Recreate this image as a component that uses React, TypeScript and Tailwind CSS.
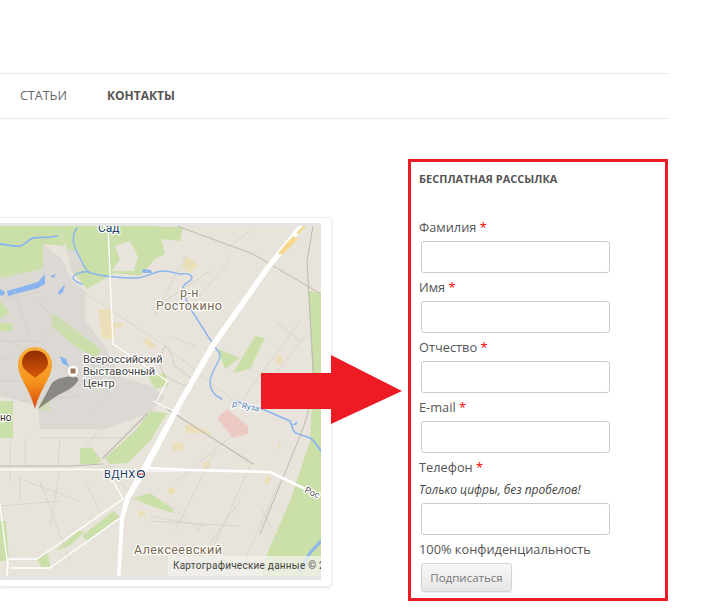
const fields = [
  { label: "Фамилия" },
  { label: "Имя" },
  { label: "Отчество" },
  { label: "E-mail" },
  { label: "Телефон", hint: "Только цифры, без пробелов!" },
];

function MapArt() {
  return (
    <svg viewBox="0 225 321 350" className="block h-[350px] w-[321px]" style={{ fontFamily: "Roboto, sans-serif" }}>
      <defs>
        <linearGradient id="pinDrop" x1="0" y1="0" x2="0" y2="1">
          <stop offset="0" stopColor="#8f2c00" />
          <stop offset="1" stopColor="#dd5a0a" />
        </linearGradient>
        <linearGradient id="pinBody" x1="0" y1="0" x2="0" y2="1">
          <stop offset="0" stopColor="#fbb03b" />
          <stop offset="0.55" stopColor="#f7941d" />
          <stop offset="1" stopColor="#d9480f" />
        </linearGradient>
      </defs>
      <rect x="0" y="225" width="321" height="350" fill="#e8e4dc" />
      {/* urban grey */}
      <path d="M0 277L43 268L43 243L62 258L72 280L85 290L85 320L105 345L120 375L150 385L165 395L150 412L105 428L40 428L38 405L0 395Z" fill="#dcd8d3" />
      {/* greens */}
      <path d="M0 225H57L65 245L43 243L43 268L0 277Z" fill="#cbdfa8" />
      <path d="M57 225H158L165 253L155 258L140 275L115 272L87 288L72 270L66 245Z" fill="#cbdfa8" />
      <path d="M66 248L78 250L84 268L72 272Z" fill="#dcd8d3" />
      <path d="M115 245L130 240L138 256L134 270L112 270L120 258Z" fill="#e8e4dc" />
      <path d="M158 226H183L180 240L160 238Z" fill="#cbdfa8" />
      <path d="M52 312L66 322L100 348L98 358L75 345L52 325Z" fill="#cbdfa8" />
      <path d="M0 322H12V330H0ZM0 300L10 312L0 318ZM100 312H105V320H100Z" fill="#cbdfa8" />
      <path d="M0 400H13V437H0Z" fill="#cbdfa8" />
      <path d="M148 375L165 372L168 385L155 388Z" fill="#cbdfa8" />
      <path d="M167 412L150 440L128 462L110 463L105 457L135 430L150 410Z" fill="#cbdfa8" />
      <path d="M80 447H92L102 460L96 463H80Z" fill="#cbdfa8" />
      <path d="M40 400H50V410H40Z" fill="#cbdfa8" opacity="0.6" />
      <path d="M0 520H6L9 560H0Z" fill="#cbdfa8" />
      <path d="M113 510L120 516L87 540L82 535Z" fill="#cbdfa8" />
      <path d="M85 530L70 545L55 550L78 530Z" fill="#cbdfa8" />
      <path d="M133 497L150 492L173 508V512L148 504Z" fill="#cbdfa8" />
      <path d="M37 558L48 552L50 566L42 567Z" fill="#cbdfa8" />
      <path d="M255 335L265 337L250 368L233 372Z" fill="#cbdfa8" />
      <path d="M218 348L240 357L225 368Z" fill="#cbdfa8" />
      <path d="M308 290L321 292V575H262L267 553L290 500L310 440L313 380Z" fill="#cbdfa8" />
      {/* yellow plots */}
      <path d="M186 255L198 264L190 272L182 266Z" fill="#ebdfb9" />
      <path d="M98 308H112V322H123V326H115V338H102Z" fill="#ebdfb9" />
      <path d="M147 336L157 345L150 348L143 341Z" fill="#ebdfb9" />
      <path d="M276 354H282V363H276ZM173 442H183V450H173ZM203 461L210 460V467H203ZM168 487H175V493H168ZM138 510H145V515H138ZM267 475L272 477L267 484L264 482ZM278 442L282 445L278 449Z" fill="#ebdfb9" />
      <path d="M185 425L192 423L213 433L198 432L186 432Z" fill="#ebdfb9" />
      {/* pink */}
      <path d="M217 417L227 408L248 425L248 433L233 437Z" fill="#edc9c4" />
      {/* water */}
      <g fill="none" stroke="#8ab4f0" strokeLinecap="round" strokeLinejoin="round">
        <path d="M0 243C10 244 15 246 20 245C27 243 28 238 33 237C42 236 50 237 57 235" strokeWidth="1.8" />
        <path d="M77 227C71 235 73 245 79 255C83 262 84 268 90 272C105 276 125 277 137 277C148 276 155 270 163 270C172 270 176 273 180 273C186 272 192 273 192 277C190 282 182 282 183 288C185 296 188 305 192 310L213 343L220 353C222 358 212 368 210 380C210 390 215 395 222 398" strokeWidth="1.4" />
        <path d="M90 271C82 270 73 273 73 277C74 280 78 282 82 283" strokeWidth="1.4" />
        <path d="M233 400C240 402 250 403 260 407L290 420C293 425 292 431 296 432L310 437C315 440 318 446 321 450" strokeWidth="1.7" />
        <path d="M321 540L310 552L300 570" strokeWidth="3" />
      </g>
      <path d="M7 290L38 281L45 273L45 283L38 287L8 295ZM0 288L5 291L3 295L0 294ZM58 291L65 283L63 291L59 294ZM50 275L56 273L54 277ZM142 268L151 269L152 272H143ZM60 355L66 358L69 366L62 362ZM82 380L86 378V384ZM292 424L298 420L296 424Z" fill="#8ab4f0" />
      {/* small streets */}
      <g fill="none" stroke="#d3cec4" strokeWidth="0.7">
        <path d="M155 315L185 255M165 300L210 270M195 300L230 260M85 292L165 345L240 405M170 335L195 345M243 398L300 320M262 390L305 335M275 320L300 340M225 248L250 230" />
        <path d="M60 320L90 345M20 360L60 320M10 340L70 370M0 340H40M30 295L85 345M20 400L80 395M10 440V480M76 470L115 465M40 480L70 560M0 505L60 500M60 470L50 525M20 478L80 500M120 480L135 500M170 486L240 428M240 500L190 570M215 450L175 530M250 465L205 565M150 520L240 525M165 500L200 530M280 480L240 570M260 505L280 545M150 515L205 525M40 437H130" />
        <path d="M0 300L40 290M15 290L30 340M40 300L60 330M0 360L30 345M55 395L100 375M85 350L110 395M120 385L90 415M0 380H20M25 437V465M60 437L58 465M100 428L85 447M20 475V500M85 480L100 510" />
      </g>
      <path d="M165 345C160 355 158 365 165 375L185 385L192 378L175 365C172 358 172 350 165 345Z" fill="none" stroke="#c9c4ba" strokeWidth="0.8" />
      <g fill="none" stroke="#bdb9b0" strokeLinecap="round" strokeLinejoin="round">
        <path d="M177 225L253 253L321 293" strokeWidth="1" />
        <path d="M313 225L307 260L313 367C313 395 310 410 300 435L260 533" strokeWidth="1" />
        <path d="M167 408L253 463" strokeWidth="1.1" />
        <path d="M147 413L103 457" strokeWidth="1.3" />
        <path d="M0 465H70L103 463" strokeWidth="1" />
      </g>
      {/* white roads */}
      <g fill="none" stroke="#ffffff" strokeLinecap="butt" strokeLinejoin="round">
        <path d="M108 225L113 343L167 380L157 400" strokeWidth="1.3" />
        <path d="M153 400L180 413" strokeWidth="1.3" />
        <path d="M0 468.5H104" strokeWidth="1.4" />
        <path d="M147 467L190 469L270 471L320 495" strokeWidth="2.6" />
        <path d="M147 470L185 470" strokeWidth="1" />
        <path d="M113 480L123 498L37 558H8L7 575" strokeWidth="1.4" />
        <path d="M120 517L50 567H10" strokeWidth="1.4" />
        <path d="M0 503L8 567" strokeWidth="1.3" />
      </g>
      <path d="M298 225L265 266L211 342L178 400L144 462L125 496L120 517L117 575H120.500L124 518L130 498L150 465L183 402L216 345L270 268L305 225Z" fill="#ffffff" />
      <path d="M278 252L293 235L298 238L282 254ZM296 232L303 225H306L299 233Z" fill="#f4d88c" />
      {/* pin */}
      <path d="M38 408L52 382C58 376 72 374 78 377C80 382 68 390 58 394Z" fill="#66665f" opacity="0.7" />
      <path d="M18 364C18 353 26 346 35 346C44 346 52 353 52 364C52 376 40 388 35 408C30 388 18 376 18 364Z" fill="url(#pinBody)" />
      <path d="M22 362C22 354 28 349.500 35 349.500C42 349.500 48 354 48 362C48 369 39 373 35 377C31 373 22 369 22 362Z" fill="url(#pinDrop)" />
      <circle cx="73" cy="370" r="6" fill="#fff" stroke="#d3cec4" />
      <rect x="70.500" y="367.500" width="5" height="5" fill="#9b7653" />
      {/* labels */}
      <g stroke="#ffffff" strokeWidth="2.4" paintOrder="stroke" strokeLinejoin="round">
        <text x="98" y="231" fontSize="12" fill="#1c3d64">Сад</text>
        <text x="180" y="296" fontSize="12.500" letterSpacing="0.4" fill="#7b6b4f">р-н</text>
        <text x="156" y="309" fontSize="12.500" letterSpacing="0.4" fill="#7b6b4f">Ростокино</text>
        <text x="83" y="362" fontSize="11" fill="#444">Всероссийский</text>
        <text x="83" y="374" fontSize="11" fill="#444">Выставочный</text>
        <text x="83" y="386" fontSize="11" fill="#444">Центр</text>
        <text x="0" y="420" fontSize="10" fill="#333">но</text>
        <text x="104" y="477" fontSize="11" letterSpacing="0.4" fill="#1c3d64">ВДНХ</text>
        <text x="134" y="553" fontSize="12.500" letterSpacing="0.4" fill="#7b6b4f">Алексеевский</text>
        <text x="232" y="405" fontSize="8.500" fill="#4b79a8" transform="rotate(12 232 405)">р. Яуза</text>
        <text x="304" y="491" fontSize="9" fill="#555" transform="rotate(25 304 491)">Рос</text>
      </g>
      <circle cx="141" cy="473" r="3.400" fill="#fff" stroke="#1c3d64" strokeWidth="1.200" />
      <rect x="138.500" y="472.400" width="5" height="1.300" fill="#d0454c" />
      {/* attribution */}
      <rect x="168" y="555" width="153" height="20" fill="#f3f1ec" opacity="0.75" />
      <text x="173" y="568" fontSize="10" letterSpacing="0.25" fill="#444">Картографические данные © 2</text>
    </svg>
  );
}

export default function App() {
  return (
    <div className="relative h-[612px] w-[716px] overflow-hidden bg-white font-['Open_Sans',sans-serif] text-[12.8px] text-[#555]">
      <div className="h-[73px]" />
      <nav className="flex h-[46px] w-[669px] items-center gap-10 border-y border-[#ececec] pl-5 text-[12.5px] uppercase text-[#666]">
        <a>Статьи</a>
        <a className="text-[12px] font-bold text-[#555]">Контакты</a>
      </nav>
      <div className="flex items-start">
        <div className="mt-[98px] w-[332px] rounded-r border-y border-r border-[#eeeeee] pb-[6px] pt-[5px] shadow-[0_1px_3px_rgba(0,0,0,0.1)]">
          <div className="w-[321px] border-b-4 border-t-[3px] border-[#e5e5e5]">
            <MapArt />
          </div>
        </div>
        <aside className="ml-[76px] mt-10 h-[442px] w-[260px] border-[3px] border-[#ed1c24] px-2 pt-[9px]">
          <h3 className="text-[11px] font-bold uppercase leading-4 text-[#555]">Бесплатная рассылка</h3>
          <form className="mt-[30px]">
            {fields.map((f) => (
              <div key={f.label}>
                <label className="block h-[20px] leading-5">
                  {f.label} <span className="text-[#ff0000]">*</span>
                </label>
                {f.hint ? <p className="mt-[3px] h-[19px] text-[12px] italic leading-5 text-[#444]">{f.hint}</p> : null}
                <input className="mb-[4px] ml-[2px] mt-[4px] block h-[32px] w-[189px] rounded-[3px] border border-[#cccccc] bg-white" />
              </div>
            ))}
            <p className="h-[20px] leading-5">100% конфиденциальность</p>
            <button
              type="button"
              className="ml-[2px] mt-[4px] h-[29px] w-[91px] rounded-[3px] border border-[#d4d4d4] bg-linear-to-b from-[#f7f7f7] to-[#e6e6e6] text-[11.5px] text-[#777] shadow-[0_1px_1px_rgba(0,0,0,0.08)]"
            >
              Подписаться
            </button>
          </form>
        </aside>
      </div>
      <svg viewBox="0 0 142 70" className="absolute left-[261px] top-[355px] h-[70px] w-[142px]">
        <path d="M0 18H70V0L141 36L70 69V54H0Z" fill="#ed1c24" />
      </svg>
    </div>
  );
}
